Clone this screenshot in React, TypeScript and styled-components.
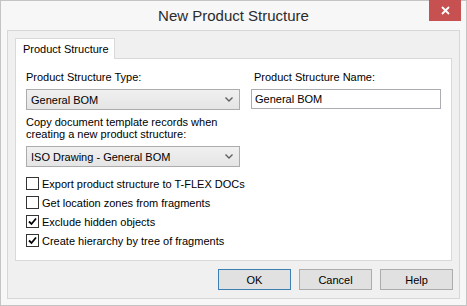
import React, { useState } from "react";
import styled, { createGlobalStyle } from "styled-components";

const GlobalStyle = createGlobalStyle`
	html, body {
		margin: 0;
		padding: 0;
		background: #ffffff;
	}
	body {
		font-family: "Liberation Sans", Arial, sans-serif;
		font-size: 11px;
		color: #000;
	}
`;

const Window = styled.div`
	width: 467px;
	height: 306px;
	box-sizing: border-box;
	border: 1px solid #c4c4c4;
	background: #f7f7f7;
	display: flex;
	flex-direction: column;
`;

const TitleBar = styled.div`
	height: 29px;
	display: grid;
	grid-template-columns: 1fr auto 1fr;
	align-items: start;
`;

const Title = styled.div`
	grid-column: 2;
	font-size: 15px;
	color: #2b2b2b;
	line-height: 29px;
`;

const CloseButton = styled.button`
	grid-column: 3;
	justify-self: end;
	margin: -1px 5px 0 0;
	width: 32px;
	height: 21px;
	border: none;
	padding: 0;
	background: #c75050;
	display: flex;
	align-items: center;
	justify-content: center;
`;

const Client = styled.div`
	flex: 1;
	margin: 0 6px 6px;
	border: 1px solid #d7d7d7;
	background: #f0f0f0;
	padding: 7px;
	display: flex;
	flex-direction: column;
`;

const TabStrip = styled.div`
	display: flex;
	height: 20px;
`;

const Tab = styled.div<{ active?: boolean }>`
	width: 100px;
	height: 21px;
	box-sizing: border-box;
	border: 1px solid #d9d9d9;
	border-bottom: none;
	background: ${({ active }) => (active ? "#ffffff" : "#f0f0f0")};
	padding-left: 7px;
	line-height: 20px;
	white-space: nowrap;
	position: relative;
	z-index: 1;
	margin-bottom: -1px;
`;

const Panel = styled.div`
	height: 203px;
	box-sizing: border-box;
	border: 1px solid #d9d9d9;
	background: #ffffff;
	padding: 11px 10px 0 10px;
	display: grid;
	grid-template-columns: 214px 190px;
	column-gap: 11px;
	align-content: start;
`;

const Column = styled.div`
	display: flex;
	flex-direction: column;
`;

const Label = styled.div<{ indent?: number }>`
	line-height: 14px;
	padding-left: ${({ indent }) => indent ?? 0}px;
	margin-bottom: 5px;
`;

const MultiLabel = styled.div`
	line-height: 12px;
	margin: 6px 0 6px;
`;

const Combo = styled.div`
	height: 21px;
	box-sizing: border-box;
	border: 1px solid #acacac;
	background: linear-gradient(#f0f0f0, #e5e5e5);
	display: flex;
	align-items: center;
	justify-content: space-between;
	padding: 0 6px 0 4px;
`;

const TextInput = styled.input`
	height: 20px;
	width: 190px;
	box-sizing: border-box;
	border: 1px solid #abadb3;
	background: #fff;
	font: inherit;
	padding: 0 3px;
	outline: none;
`;

const Checks = styled.div`
	grid-column: 1 / span 2;
	display: flex;
	flex-direction: column;
	margin-top: 10px;
	gap: 6px;
`;

const CheckRow = styled.label`
	display: flex;
	align-items: center;
	gap: 3px;
	height: 13px;
	white-space: nowrap;
`;

const Box = styled.span`
	width: 13px;
	height: 13px;
	box-sizing: border-box;
	border: 1px solid #333;
	background: #fff;
	display: flex;
	align-items: center;
	justify-content: center;
`;

const ButtonRow = styled.div`
	display: flex;
	justify-content: flex-end;
	gap: 8px;
	margin: 8px -1px 0 0;
`;

const Button = styled.button<{ primary?: boolean }>`
	width: 73px;
	height: 21px;
	box-sizing: border-box;
	border: 1px solid ${({ primary }) => (primary ? "#3c7fb1" : "#acacac")};
	background: #e1e1e1;
	font: inherit;
	color: #000;
	padding: 0;
`;

const Chevron = () => (
	<svg width="8" height="5" viewBox="0 0 8 5">
		<path d="M0.5 0.5 L4 4 L7.5 0.5" fill="none" stroke="#606060" strokeWidth="1.4" />
	</svg>
);

const CheckMark = () => (
	<svg width="9" height="9" viewBox="0 0 9 9">
		<path d="M1 4.5 L3.5 7 L8 1.5" fill="none" stroke="#000" strokeWidth="1.8" />
	</svg>
);

const checkOptions = [
	{ label: "Export product structure to T-FLEX DOCs", checked: false },
	{ label: "Get location zones from fragments", checked: false },
	{ label: "Exclude hidden objects", checked: true },
	{ label: "Create hierarchy by tree of fragments", checked: true },
];

const App: React.FC = () => {
	const [name, setName] = useState("General BOM");

	return (
		<>
			<GlobalStyle />
			<Window>
				<TitleBar>
					<Title>New Product Structure</Title>
					<CloseButton>
						<svg width="9" height="9" viewBox="0 0 9 9">
							<path d="M1 1 L8 8 M8 1 L1 8" stroke="#fff" strokeWidth="1.8" />
						</svg>
					</CloseButton>
				</TitleBar>
				<Client>
					<TabStrip>
						<Tab active>Product Structure</Tab>
					</TabStrip>
					<Panel>
						<Column>
							<Label>Product Structure Type:</Label>
							<Combo>
								<span>General BOM</span>
								<Chevron />
							</Combo>
							<MultiLabel>
								Copy document template records when
								<br />
								creating a new product structure:
							</MultiLabel>
							<Combo>
								<span>ISO Drawing - General BOM</span>
								<Chevron />
							</Combo>
						</Column>
						<Column>
							<Label indent={3}>Product Structure Name:</Label>
							<TextInput value={name} onChange={(e) => setName(e.target.value)} />
						</Column>
						<Checks>
							{checkOptions.map((opt) => (
								<CheckRow key={opt.label}>
									<Box>{opt.checked && <CheckMark />}</Box>
									{opt.label}
								</CheckRow>
							))}
						</Checks>
					</Panel>
					<ButtonRow>
						<Button primary>OK</Button>
						<Button>Cancel</Button>
						<Button>Help</Button>
					</ButtonRow>
				</Client>
			</Window>
		</>
	);
};

export default App;
